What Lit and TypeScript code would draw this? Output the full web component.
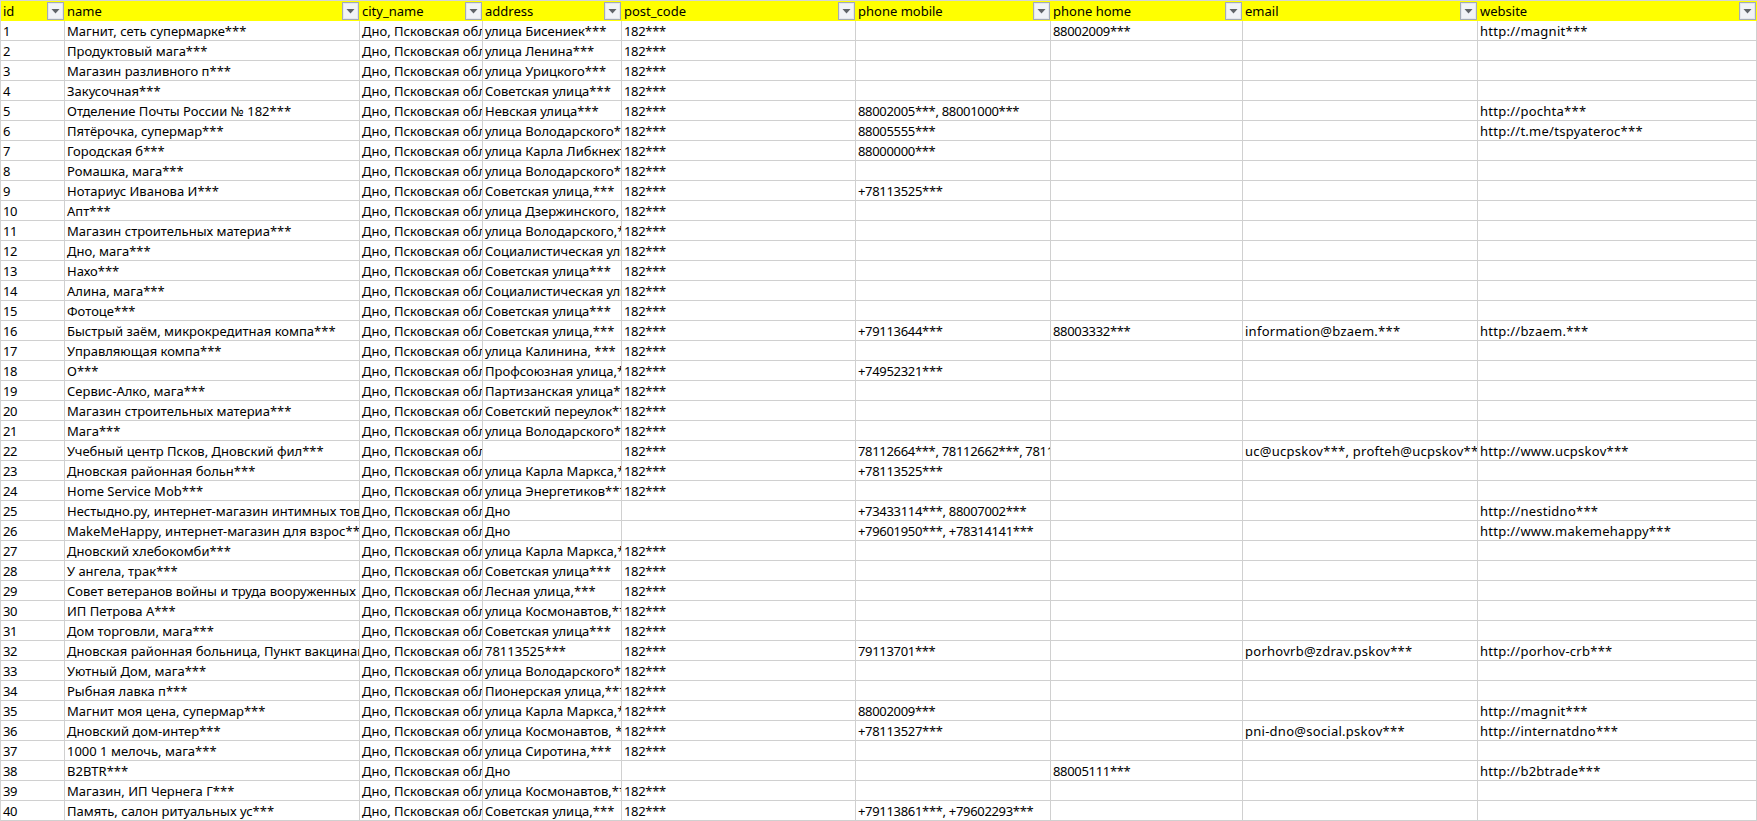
import { LitElement, html, css } from "lit";
import { customElement } from "lit/decorators.js";

const HEAD: [string, string][] = [
  ["id", "c-num"], ["name", ""], ["city_name", ""], ["address", ""], ["post_code", ""],
  ["phone mobile", ""], ["phone home", ""], ["email", "c-lat"], ["website", "c-lat"],
];

// name, address, post, mobile, home, email, website
const P = "182***";
const ROWS: string[][] = [
  ["Магнит, сеть супермарке***", "улица Бисениек***", P, "", "88002009***", "", "http://magnit***"],
  ["Продуктовый мага***", "улица Ленина***", P, "", "", "", ""],
  ["Магазин разливного п***", "улица Урицкого***", P, "", "", "", ""],
  ["Закусочная***", "Советская улица***", P, "", "", "", ""],
  ["Отделение Почты России № 182***", "Невская улица***", P, "88002005***, 88001000***", "", "", "http://pochta***"],
  ["Пятёрочка, супермар***", "улица Володарского***", P, "88005555***", "", "", "http://t.me/tspyateroc***"],
  ["Городская б***", "улица Карла Либкнехта***", P, "88000000***", "", "", ""],
  ["Ромашка, мага***", "улица Володарского***", P, "", "", "", ""],
  ["Нотариус Иванова И***", "Советская улица,***", P, "+78113525***", "", "", ""],
  ["Апт***", "улица Дзержинского, ***", P, "", "", "", ""],
  ["Магазин строительных материа***", "улица Володарского,***", P, "", "", "", ""],
  ["Дно, мага***", "Социалистическая улица***", P, "", "", "", ""],
  ["Нахо***", "Советская улица***", P, "", "", "", ""],
  ["Алина, мага***", "Социалистическая улица***", P, "", "", "", ""],
  ["Фотоце***", "Советская улица***", P, "", "", "", ""],
  ["Быстрый заём, микрокредитная компа***", "Советская улица,***", P, "+79113644***", "88003332***", "information@bzaem.***", "http://bzaem.***"],
  ["Управляющая компа***", "улица Калинина, ***", P, "", "", "", ""],
  ["О***", "Профсоюзная улица,***", P, "+74952321***", "", "", ""],
  ["Сервис-Алко, мага***", "Партизанская улица***", P, "", "", "", ""],
  ["Магазин строительных материа***", "Советский переулок***", P, "", "", "", ""],
  ["Мага***", "улица Володарского***", P, "", "", "", ""],
  ["Учебный центр Псков, Дновский фил***", "", P, "78112664***, 78112662***, 78112***", "", "uc@ucpskov***, profteh@ucpskov***", "http://www.ucpskov***"],
  ["Дновская районная больн***", "улица Карла Маркса,***", P, "+78113525***", "", "", ""],
  ["Home Service Mob***", "улица Энергетиков***", P, "", "", "", ""],
  ["Нестыдно.ру, интернет-магазин интимных товаров***", "Дно", "", "+73433114***, 88007002***", "", "", "http://nestidno***"],
  ["MakeMeHappy, интернет-магазин для взрос***", "Дно", "", "+79601950***, +78314141***", "", "", "http://www.makemehappy***"],
  ["Дновский хлебокомби***", "улица Карла Маркса,***", P, "", "", "", ""],
  ["У ангела, трак***", "Советская улица***", P, "", "", "", ""],
  ["Совет ветеранов войны и труда вооруженных сил***", "Лесная улица,***", P, "", "", "", ""],
  ["ИП Петрова А***", "улица Космонавтов,***", P, "", "", "", ""],
  ["Дом торговли, мага***", "Советская улица***", P, "", "", "", ""],
  ["Дновская районная больница, Пункт вакцинации***", "78113525***", P, "79113701***", "", "porhovrb@zdrav.pskov***", "http://porhov-crb***"],
  ["Уютный Дом, мага***", "улица Володарского***", P, "", "", "", ""],
  ["Рыбная лавка п***", "Пионерская улица,***", P, "", "", "", ""],
  ["Магнит моя цена, супермар***", "улица Карла Маркса,***", P, "88002009***", "", "", "http://magnit***"],
  ["Дновский дом-интер***", "улица Космонавтов, ***", P, "+78113527***", "", "pni-dno@social.pskov***", "http://internatdno***"],
  ["1000 1 мелочь, мага***", "улица Сиротина,***", P, "", "", "", ""],
  ["B2BTR***", "Дно", "", "", "88005111***", "", "http://b2btrade***"],
  ["Магазин, ИП Чернега Г***", "улица Космонавтов,***", P, "", "", "", ""],
  ["Память, салон ритуальных ус***", "Советская улица,***", P, "+79113861***, +79602293***", "", "", ""],
];

const CITY = "Дно, Псковская область";

@customElement("app-root")
export class AppRoot extends LitElement {
  static styles = css`
    :host {
      display: block;
      width: 1757px;
      height: 821px;
      overflow: hidden;
      background: #fff;
      font-family: "Noto Sans", sans-serif;
      font-size: 13px;
      color: #000;
    }
    .sheet {
      display: grid;
      grid-template-columns: 64px 295px 123px 139px 234px 195px 192px 235px 279px;
      grid-auto-rows: 20px;
      border-top: 1px solid #d4d4d4;
      border-left: 1px solid #d4d4d4;
    }
    .cell {
      box-sizing: border-box;
      border-right: 1px solid #d0d0d0;
      border-bottom: 1px solid #d0d0d0;
      padding-left: 2px;
      line-height: 21px;
      white-space: nowrap;
      overflow: hidden;
    }
    .head {
      display: flex;
      justify-content: space-between;
      align-items: flex-start;
      background: #ffff00;
      border-color: #ffff00;
      height: 20px;
      line-height: 20px;
    }
    .num { letter-spacing: -0.32px; }
    .lat { letter-spacing: 0.26px; }
    .btn {
      box-sizing: border-box;
      flex: none;
      display: flex;
      align-items: center;
      justify-content: center;
      width: 17px;
      height: 18px;
      margin-top: 1px;
      background: #f1f3f6;
      border: 1px solid #a3abb6;
      box-shadow: inset 0 0 0 1px #e4e7ec;
    }
    .btn svg { display: block; }
  `;

  private head(label: string, cls: string) {
    return html`<div class="cell head ${cls}">
      <span>${label}</span>
      <span class="btn">
        <svg width="9" height="5" viewBox="0 0 9 5"><path d="M0.5 0h8L4.5 4.5z" fill="#5f6368"></path></svg>
      </span>
    </div>`;
  }

  private row(r: string[], i: number) {
    const [name, addr, post, mobile, home, email, site] = r;
    return html`
      <div class="cell num">${i + 1}</div>
      <div class="cell">${name}</div>
      <div class="cell">${CITY}</div>
      <div class="cell">${addr}</div>
      <div class="cell num">${post}</div>
      <div class="cell num">${mobile}</div>
      <div class="cell num">${home}</div>
      <div class="cell lat">${email}</div>
      <div class="cell lat">${site}</div>
    `;
  }

  render() {
    return html`<div class="sheet">
      ${HEAD.map(([l, c]) => this.head(l, c))}
      ${ROWS.map((r, i) => this.row(r, i))}
    </div>`;
  }
}
